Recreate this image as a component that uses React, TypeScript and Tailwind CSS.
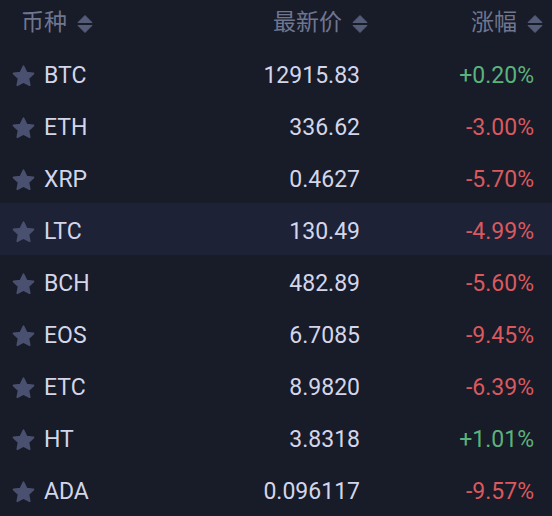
import React from 'react';

type Row = { sym: string; price: string; pct: string };

const ROWS: Row[] = [
  { sym: 'BTC', price: '12915.83', pct: '+0.20%' },
  { sym: 'ETH', price: '336.62', pct: '-3.00%' },
  { sym: 'XRP', price: '0.4627', pct: '-5.70%' },
  { sym: 'LTC', price: '130.49', pct: '-4.99%' },
  { sym: 'BCH', price: '482.89', pct: '-5.60%' },
  { sym: 'EOS', price: '6.7085', pct: '-9.45%' },
  { sym: 'ETC', price: '8.9820', pct: '-6.39%' },
  { sym: 'HT', price: '3.8318', pct: '+1.01%' },
  { sym: 'ADA', price: '0.096117', pct: '-9.57%' },
];

function SortIcon() {
  return (
    <svg width="16" height="20" viewBox="0 0 16 20" className="ml-[10px]">
      <path d="M8 1.5 L15 8.5 H1 Z" fill="#555c78" strokeLinejoin="round" stroke="#555c78" strokeWidth="1" />
      <path d="M8 18.5 L15 11.5 H1 Z" fill="#555c78" strokeLinejoin="round" stroke="#555c78" strokeWidth="1" />
    </svg>
  );
}

function Star() {
  return (
    <svg width="25" height="25" viewBox="0 0 24 24">
      <path
        d="M12 2.2l2.9 6.1 6.6.8-4.9 4.6 1.3 6.6L12 17.1l-5.9 3.2 1.3-6.6-4.9-4.6 6.6-.8z"
        fill="#4a5070"
        stroke="#4a5070"
        strokeWidth="1.8"
        strokeLinejoin="round"
      />
    </svg>
  );
}

export default function App() {
  return (
    <div
      className="w-[552px] h-[516px] bg-[#181b28] overflow-hidden"
      style={{ fontFamily: 'Roboto, "Noto Sans CJK SC", sans-serif' }}
    >
      <div className="h-[47px] flex items-center text-[23px] text-[#6f7690]">
        <div className="w-[200px] pl-[21px] flex items-center">
          币种
          <SortIcon />
        </div>
        <div className="w-[168px] flex items-center justify-end">
          最新价
          <SortIcon />
        </div>
        <div className="flex-1 flex items-center justify-end pr-[9px]">
          涨幅
          <SortIcon />
        </div>
      </div>
      {ROWS.map((r) => (
        <div
          key={r.sym}
          className={
            'h-[52px] pt-[6px] flex items-center text-[23px] ' + (r.sym === 'LTC' ? 'bg-[#1e2236]' : '')
          }
        >
          <div className="w-[200px] flex items-center pl-[11px] gap-[8px] text-[#d3d6ea]">
            <Star />
            <span>{r.sym}</span>
          </div>
          <div className="w-[160px] text-right text-[#d3d6ea]">{r.price}</div>
          <div
            className={
              'flex-1 text-right pr-[18px] ' +
              (r.pct.startsWith('+') ? 'text-[#5bb37c]' : 'text-[#d9595e]')
            }
          >
            {r.pct}
          </div>
        </div>
      ))}
    </div>
  );
}
